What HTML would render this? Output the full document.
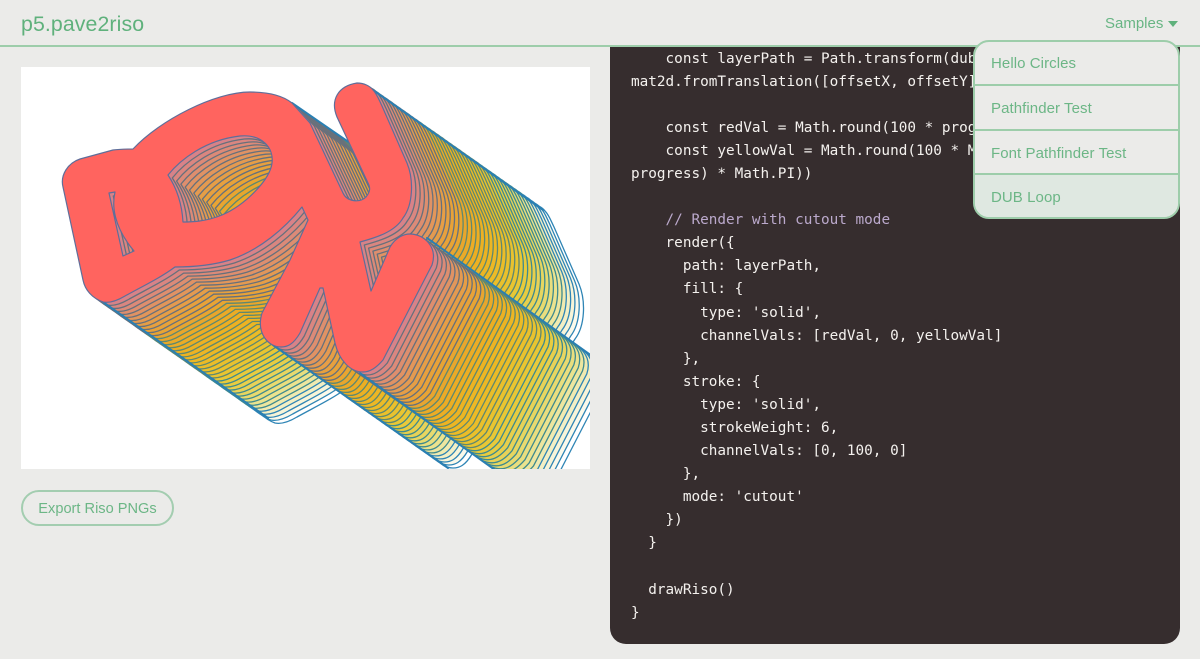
<!DOCTYPE html>
<html lang="en">
<head>
<meta charset="utf-8">
<title>p5.pave2riso</title>
<style>
html,body{margin:0;padding:0}
body{width:1200px;height:659px;overflow:hidden;position:relative;background:#ebebe9;font-family:"Liberation Sans",sans-serif;color:#5fb17c}
.abs{position:absolute}
#logo{left:21px;top:10px;font-size:21.3px;line-height:28px;white-space:nowrap;letter-spacing:.1px}
#rule{left:0;top:45px;width:1200px;height:2px;background:#9dcdaa}
#samples{left:1105px;top:15px;font-size:15px;line-height:18px;white-space:nowrap;color:#68b584}
#tri{left:1168px;top:21px;width:0;height:0;border-left:5.5px solid transparent;border-right:5.5px solid transparent;border-top:6px solid #5fb17c}
#art{left:0;top:0}
#btn{left:21px;top:490px;width:149px;height:32px;border:2px solid #a3cdb0;border-radius:18px;font-size:14.6px;line-height:35px;text-align:center;white-space:nowrap;color:#6cb686}
#code{left:610px;top:46px;width:570px;height:598px;background:#362d2e;border-radius:0 0 16px 16px;overflow:hidden}
#code pre{position:absolute;left:21px;top:1.5px;margin:0;font-family:"DejaVu Sans Mono","Liberation Mono",monospace;font-size:14.35px;line-height:23.09px;color:#f4f1ee}
#code .c{color:#bba9cc}
#menu{left:973px;top:40px;width:203px;height:175px;border:2px solid #9dcdaa;border-radius:16px;background:#ebebe9;overflow:hidden}
#menu div{padding-left:16px;font-size:15px;border-bottom:2px solid #9dcdaa;white-space:nowrap;color:#6cb686;letter-spacing:.07px}
#menu .a{height:42px;line-height:43px}
#menu .b{height:43px;line-height:45px}
#menu .c{height:42px;line-height:45px}
#menu .d{height:42px;line-height:45px;border-bottom:0;background:#dfe8e1}
</style>
</head>
<body>
<div class="abs" id="code"><pre>    const layerPath = Path.transform(dubPath,
mat2d.fromTranslation([offsetX, offsetY]))

    const redVal = Math.round(100 * progress)
    const yellowVal = Math.round(100 * Math.sin((1 -
progress) * Math.PI))

    <span class="c">// Render with cutout mode</span>
    render({
      path: layerPath,
      fill: {
        type: 'solid',
        channelVals: [redVal, 0, yellowVal]
      },
      stroke: {
        type: 'solid',
        strokeWeight: 6,
        channelVals: [0, 100, 0]
      },
      mode: 'cutout'
    })
  }

  drawRiso()
}</pre></div>
<div class="abs" id="rule"></div>
<div class="abs" id="logo">p5.pave2riso</div>
<div class="abs" id="samples">Samples</div>
<div class="abs" id="tri"></div>
<div class="abs" id="menu">
<div class="a">Hello Circles</div>
<div class="b">Pathfinder Test</div>
<div class="c">Font Pathfinder Test</div>
<div class="d">DUB Loop</div>
</div>
<svg class="abs" id="art" width="600" height="480" viewBox="0 0 600 480">
<defs>
<clipPath id="cp"><rect x="21" y="67" width="569" height="402"/></clipPath>
<path id="s" fill-rule="evenodd" d="M133 149C160 120 215 92 250 92C268 92 282 95 292 103L310 123L343 193C347 202 360 203 366 197C371 191 370 187 368 183L337 117C330 100 338 86 357 83C364 83 370 86 373 90C377 94 379 100 382 106L407 163C414 180 413 205 403 218C395 232 375 238 360 242L371 291L390 247C396 237 404 234 410 234C424 234 438 247 432 265L383 360C376 368 370 372 363 372C350 372 339 360 335 343L323 288L320 288L300 333C293 345 287 347 281 347C268 347 256 333 262 313L290 260L308 220L302 207C285 228 260 250 230 260C210 266 190 267 175 267C160 278 145 285 125 296C115 302 108 303 103 302C92 298 85 290 83 280L63 187C60 175 68 163 80 159L113 150C120 149 128 149 133 149ZM168 175C180 160 205 140 240 136C262 134 274 148 272 163C270 180 245 205 222 215C205 222 190 222 183 222C182 205 178 190 168 175ZM109 193L115 192C112 205 113 226 134 251L123 256Z"/>
</defs>
<rect x="21" y="67" width="569" height="402" fill="#fff"/>
<g clip-path="url(#cp)" stroke-width="1.3" stroke-linejoin="round">
<g stroke="#2f85b5">
<use href="#s" transform="translate(172 121)" fill="#ffffff"/>
<use href="#s" transform="translate(167.7 118)" fill="#fbf9ea"/>
<use href="#s" transform="translate(163.4 115)" fill="#f7f4d8"/>
<use href="#s" transform="translate(159.1 111.9)" fill="#f3efc4"/>
<use href="#s" transform="translate(154.8 108.9)" fill="#f0eab0"/>
</g>
<g stroke="#3f8a8e">
<use href="#s" transform="translate(150.5 105.9)" fill="#ede69f"/>
<use href="#s" transform="translate(146.2 102.9)" fill="#ebe38e"/>
<use href="#s" transform="translate(141.9 99.8)" fill="#e9de7e"/>
<use href="#s" transform="translate(137.6 96.8)" fill="#e8da6f"/>
<use href="#s" transform="translate(133.3 93.8)" fill="#e7d660"/>
<use href="#s" transform="translate(129 90.8)" fill="#e7d258"/>
<use href="#s" transform="translate(124.7 87.7)" fill="#e7cf4c"/>
<use href="#s" transform="translate(120.4 84.7)" fill="#e7cc40"/>
<use href="#s" transform="translate(116.1 81.7)" fill="#e8ca3b"/>
<use href="#s" transform="translate(111.8 78.7)" fill="#e8c735"/>
</g>
<g stroke="#5f8870">
<use href="#s" transform="translate(107.5 75.6)" fill="#e9c530"/>
<use href="#s" transform="translate(103.2 72.6)" fill="#e9c22e"/>
<use href="#s" transform="translate(98.9 69.6)" fill="#eac02b"/>
<use href="#s" transform="translate(94.6 66.6)" fill="#ebbd28"/>
<use href="#s" transform="translate(90.3 63.5)" fill="#ecbb26"/>
<use href="#s" transform="translate(86 60.5)" fill="#edb824"/>
<use href="#s" transform="translate(81.7 57.5)" fill="#edb623"/>
<use href="#s" transform="translate(77.4 54.5)" fill="#edb322"/>
<use href="#s" transform="translate(73.1 51.4)" fill="#edb122"/>
<use href="#s" transform="translate(68.8 48.4)" fill="#edae22"/>
<use href="#s" transform="translate(64.5 45.4)" fill="#ecac25"/>
<use href="#s" transform="translate(60.2 42.4)" fill="#ebaa27"/>
<use href="#s" transform="translate(55.9 39.3)" fill="#e8a62c"/>
<use href="#s" transform="translate(51.6 36.3)" fill="#e8a530"/>
</g>
<g stroke="#66707c">
<use href="#s" transform="translate(47.3 33.3)" fill="#e8a434"/>
<use href="#s" transform="translate(43 30.3)" fill="#e8a238"/>
<use href="#s" transform="translate(38.7 27.2)" fill="#e7a03e"/>
<use href="#s" transform="translate(34.4 24.2)" fill="#e69e46"/>
<use href="#s" transform="translate(30.1 21.2)" fill="#e49a50"/>
<use href="#s" transform="translate(25.8 18.2)" fill="#e2965a"/>
<use href="#s" transform="translate(21.5 15.1)" fill="#e09264"/>
<use href="#s" transform="translate(17.2 12.1)" fill="#de8e6e"/>
<use href="#s" transform="translate(12.9 9.1)" fill="#dc8a78"/>
<use href="#s" transform="translate(8.6 6.1)" fill="#da8680"/>
<use href="#s" transform="translate(4.3 3)" fill="#d88288"/>
</g>
<g stroke="#2a7fb2" stroke-width="2" fill="none" stroke-linecap="round">
<path d="M103 302L268 418"/>
<path d="M373 90L543 210"/>
<path d="M427 238L592 356"/>
<path d="M273 345L448 468"/>
<path d="M360 373L495 470"/>
<path d="M292 103L350 143"/>
</g>
<use href="#s" fill="#ff645f" stroke="#5f6e9a" stroke-width="1.2"/>
</g>
</svg>
<div class="abs" id="btn">Export Riso PNGs</div>
</body>
</html>
